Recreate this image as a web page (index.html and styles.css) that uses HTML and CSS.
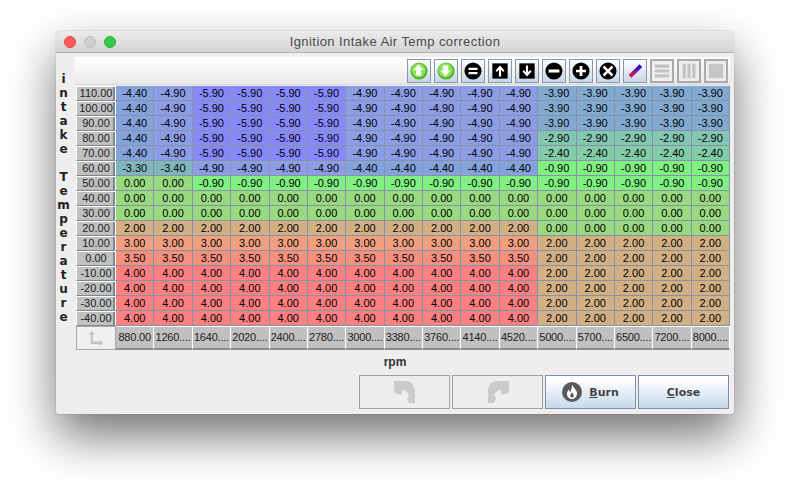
FILE: index.html
```html
<!DOCTYPE html>
<html lang="en">
<head>
    <meta charset="UTF-8">
    <meta name="viewport" content="width=device-width, initial-scale=1.0">
    <title>Ignition Intake Air Temp correction</title>
    <link rel="stylesheet" href="styles.css">
</head>
<body>

<div class="window">
    <div class="titlebar">
        <span class="light light-close"></span>
        <span class="light light-min"></span>
        <span class="light light-max"></span>
        <span class="title">Ignition Intake Air Temp correction</span>
    </div>

    <div class="content">
        <div class="y-label">i<br>n<br>t<br>a<br>k<br>e<br>&nbsp;<br>T<br>e<br>m<br>p<br>e<br>r<br>a<br>t<br>u<br>r<br>e</div>

        <div class="main">
            <div class="toolbar">
                <button class="tool"><svg viewBox="0 0 20 20"><circle cx="10" cy="10" r="9.500" fill="#52b025"/><circle cx="9.500" cy="9.300" r="8" fill="#8ae052"/><path d="M9.500 2.500 15.500 9H12.500V15H6.500V9H3.500Z" fill="#f4fbee"/></svg></button>
                <button class="tool"><svg viewBox="0 0 20 20"><circle cx="10" cy="10" r="9.500" fill="#52b025"/><circle cx="9.500" cy="9.300" r="8" fill="#8ae052"/><path d="M9.500 16 15.500 9.500H12.500V3.500H6.500V9.500H3.500Z" fill="#f4fbee"/></svg></button>
                <button class="tool"><svg viewBox="0 0 20 20"><circle cx="10" cy="10" r="9.500" fill="#000"/><path d="M5 6.500H15V9H5ZM5 11H15V13.500H5Z" fill="#fff"/></svg></button>
                <button class="tool"><svg viewBox="0 0 20 20"><rect x="1.500" y="1.500" width="17" height="17" fill="#000"/><path d="M10 4 15 9.500 13.500 11 11.200 8.600V16H8.800V8.600L6.500 11 5 9.500Z" fill="#fff"/></svg></button>
                <button class="tool"><svg viewBox="0 0 20 20"><rect x="1.500" y="1.500" width="17" height="17" fill="#000"/><path d="M10 16 15 10.500 13.500 9 11.200 11.400V4H8.800V11.400L6.500 9 5 10.500Z" fill="#fff"/></svg></button>
                <button class="tool"><svg viewBox="0 0 20 20"><circle cx="10" cy="10" r="9.500" fill="#000"/><rect x="4" y="8.300" width="12" height="3.400" fill="#fff"/></svg></button>
                <button class="tool"><svg viewBox="0 0 20 20"><circle cx="10" cy="10" r="9.500" fill="#000"/><path d="M8.500 4.500H11.500V8.500H15.500V11.500H11.500V15.500H8.500V11.500H4.500V8.500H8.500Z" fill="#fff"/></svg></button>
                <button class="tool"><svg viewBox="0 0 20 20"><circle cx="10" cy="10" r="9.500" fill="#000"/><path d="M6 4 10 8 14 4 16 6 12 10 16 14 14 16 10 12 6 16 4 14 8 10 4 6Z" fill="#fff"/></svg></button>
                <button class="tool"><svg viewBox="0 0 20 20"><defs><linearGradient id="pen" x1="0" y1="1" x2="1" y2="0"><stop offset="0" stop-color="#f00"/><stop offset=".35" stop-color="#a01878"/><stop offset="1" stop-color="#00f"/></linearGradient></defs><path d="M3 15 15 3 18 6 6 18Z" fill="url(#pen)" transform="translate(0 -.5)"/></svg></button>
                <button class="tool tool-off"><svg viewBox="0 0 20 20"><path d="M1 2H19V6H1ZM1 8H19V12H1ZM1 14H19V18H1Z" fill="#c2c2c2"/></svg></button>
                <button class="tool tool-off"><svg viewBox="0 0 20 20"><path d="M2 1H6V19H2ZM8 1H12V19H8ZM14 1H18V19H14Z" fill="#c2c2c2"/></svg></button>
                <button class="tool tool-off"><svg viewBox="0 0 20 20"><rect x="1" y="1" width="18" height="18" fill="#c6c6c6"/></svg></button>
            </div>

            <table class="grid">
                <tr><th>110.00</th><td class="a">-4.40</td><td class="b">-4.90</td><td class="p">-5.90</td><td class="p">-5.90</td><td class="p">-5.90</td><td class="p">-5.90</td><td class="b">-4.90</td><td class="b">-4.90</td><td class="b">-4.90</td><td class="b">-4.90</td><td class="b">-4.90</td><td class="c">-3.90</td><td class="c">-3.90</td><td class="c">-3.90</td><td class="c">-3.90</td><td class="c">-3.90</td></tr>
                <tr><th>100.00</th><td class="a">-4.40</td><td class="b">-4.90</td><td class="p">-5.90</td><td class="p">-5.90</td><td class="p">-5.90</td><td class="p">-5.90</td><td class="b">-4.90</td><td class="b">-4.90</td><td class="b">-4.90</td><td class="b">-4.90</td><td class="b">-4.90</td><td class="c">-3.90</td><td class="c">-3.90</td><td class="c">-3.90</td><td class="c">-3.90</td><td class="c">-3.90</td></tr>
                <tr><th>90.00</th><td class="a">-4.40</td><td class="b">-4.90</td><td class="p">-5.90</td><td class="p">-5.90</td><td class="p">-5.90</td><td class="p">-5.90</td><td class="b">-4.90</td><td class="b">-4.90</td><td class="b">-4.90</td><td class="b">-4.90</td><td class="b">-4.90</td><td class="c">-3.90</td><td class="c">-3.90</td><td class="c">-3.90</td><td class="c">-3.90</td><td class="c">-3.90</td></tr>
                <tr><th>80.00</th><td class="a">-4.40</td><td class="b">-4.90</td><td class="p">-5.90</td><td class="p">-5.90</td><td class="p">-5.90</td><td class="p">-5.90</td><td class="b">-4.90</td><td class="b">-4.90</td><td class="b">-4.90</td><td class="b">-4.90</td><td class="b">-4.90</td><td class="d">-2.90</td><td class="d">-2.90</td><td class="d">-2.90</td><td class="d">-2.90</td><td class="d">-2.90</td></tr>
                <tr><th>70.00</th><td class="a">-4.40</td><td class="b">-4.90</td><td class="p">-5.90</td><td class="p">-5.90</td><td class="p">-5.90</td><td class="p">-5.90</td><td class="b">-4.90</td><td class="b">-4.90</td><td class="b">-4.90</td><td class="b">-4.90</td><td class="b">-4.90</td><td class="e">-2.40</td><td class="e">-2.40</td><td class="e">-2.40</td><td class="e">-2.40</td><td class="e">-2.40</td></tr>
                <tr><th>60.00</th><td class="f">-3.30</td><td class="f">-3.40</td><td class="b">-4.90</td><td class="b">-4.90</td><td class="b">-4.90</td><td class="b">-4.90</td><td class="a">-4.40</td><td class="a">-4.40</td><td class="a">-4.40</td><td class="a">-4.40</td><td class="a">-4.40</td><td class="g">-0.90</td><td class="g">-0.90</td><td class="g">-0.90</td><td class="g">-0.90</td><td class="g">-0.90</td></tr>
                <tr><th>50.00</th><td class="h">0.00</td><td class="h">0.00</td><td class="g">-0.90</td><td class="g">-0.90</td><td class="g">-0.90</td><td class="g">-0.90</td><td class="g">-0.90</td><td class="g">-0.90</td><td class="g">-0.90</td><td class="g">-0.90</td><td class="g">-0.90</td><td class="g">-0.90</td><td class="g">-0.90</td><td class="g">-0.90</td><td class="g">-0.90</td><td class="g">-0.90</td></tr>
                <tr><th>40.00</th><td class="h">0.00</td><td class="h">0.00</td><td class="h">0.00</td><td class="h">0.00</td><td class="h">0.00</td><td class="h">0.00</td><td class="h">0.00</td><td class="h">0.00</td><td class="h">0.00</td><td class="h">0.00</td><td class="h">0.00</td><td class="h">0.00</td><td class="h">0.00</td><td class="h">0.00</td><td class="h">0.00</td><td class="h">0.00</td></tr>
                <tr><th>30.00</th><td class="h">0.00</td><td class="h">0.00</td><td class="h">0.00</td><td class="h">0.00</td><td class="h">0.00</td><td class="h">0.00</td><td class="h">0.00</td><td class="h">0.00</td><td class="h">0.00</td><td class="h">0.00</td><td class="h">0.00</td><td class="h">0.00</td><td class="h">0.00</td><td class="h">0.00</td><td class="h">0.00</td><td class="h">0.00</td></tr>
                <tr><th>20.00</th><td class="i">2.00</td><td class="i">2.00</td><td class="i">2.00</td><td class="i">2.00</td><td class="i">2.00</td><td class="i">2.00</td><td class="i">2.00</td><td class="i">2.00</td><td class="i">2.00</td><td class="i">2.00</td><td class="i">2.00</td><td class="h">0.00</td><td class="h">0.00</td><td class="h">0.00</td><td class="h">0.00</td><td class="h">0.00</td></tr>
                <tr><th>10.00</th><td class="j">3.00</td><td class="j">3.00</td><td class="j">3.00</td><td class="j">3.00</td><td class="j">3.00</td><td class="j">3.00</td><td class="j">3.00</td><td class="j">3.00</td><td class="j">3.00</td><td class="j">3.00</td><td class="j">3.00</td><td class="i">2.00</td><td class="i">2.00</td><td class="i">2.00</td><td class="i">2.00</td><td class="i">2.00</td></tr>
                <tr><th>0.00</th><td class="k">3.50</td><td class="k">3.50</td><td class="k">3.50</td><td class="k">3.50</td><td class="k">3.50</td><td class="k">3.50</td><td class="k">3.50</td><td class="k">3.50</td><td class="k">3.50</td><td class="k">3.50</td><td class="k">3.50</td><td class="i">2.00</td><td class="i">2.00</td><td class="i">2.00</td><td class="i">2.00</td><td class="i">2.00</td></tr>
                <tr><th>-10.00</th><td class="r">4.00</td><td class="r">4.00</td><td class="r">4.00</td><td class="r">4.00</td><td class="r">4.00</td><td class="r">4.00</td><td class="r">4.00</td><td class="r">4.00</td><td class="r">4.00</td><td class="r">4.00</td><td class="r">4.00</td><td class="i">2.00</td><td class="i">2.00</td><td class="i">2.00</td><td class="i">2.00</td><td class="i">2.00</td></tr>
                <tr><th>-20.00</th><td class="r">4.00</td><td class="r">4.00</td><td class="r">4.00</td><td class="r">4.00</td><td class="r">4.00</td><td class="r">4.00</td><td class="r">4.00</td><td class="r">4.00</td><td class="r">4.00</td><td class="r">4.00</td><td class="r">4.00</td><td class="i">2.00</td><td class="i">2.00</td><td class="i">2.00</td><td class="i">2.00</td><td class="i">2.00</td></tr>
                <tr><th>-30.00</th><td class="r">4.00</td><td class="r">4.00</td><td class="r">4.00</td><td class="r">4.00</td><td class="r">4.00</td><td class="r">4.00</td><td class="r">4.00</td><td class="r">4.00</td><td class="r">4.00</td><td class="r">4.00</td><td class="r">4.00</td><td class="i">2.00</td><td class="i">2.00</td><td class="i">2.00</td><td class="i">2.00</td><td class="i">2.00</td></tr>
                <tr><th>-40.00</th><td class="r">4.00</td><td class="r">4.00</td><td class="r">4.00</td><td class="r">4.00</td><td class="r">4.00</td><td class="r">4.00</td><td class="r">4.00</td><td class="r">4.00</td><td class="r">4.00</td><td class="r">4.00</td><td class="r">4.00</td><td class="i">2.00</td><td class="i">2.00</td><td class="i">2.00</td><td class="i">2.00</td><td class="i">2.00</td></tr>
                <tr class="x-axis">
                    <th class="corner"><svg viewBox="0 0 18 18"><path d="M4 1 7.500 5H5.500V13H13V11L17 14.500 13 18V16H3V5H.5Z" fill="#c4c4c4"/></svg></th>
                    <th>880.00</th><th>1260....</th><th>1640....</th><th>2020....</th><th>2400....</th><th>2780....</th><th>3000....</th><th>3380....</th><th>3760....</th><th>4140....</th><th>4520....</th><th>5000....</th><th>5700....</th><th>6500....</th><th>7200....</th><th>8000....</th>
                </tr>
            </table>
        </div>
    </div>

    <div class="x-label">rpm</div>

    <div class="actions">
        <button class="action" disabled><svg viewBox="0 0 24 24"><path d="M1 1H14C19 1 22 6 22 12V23H16L14 19 16 15C15 12 12 10 9 10V15L2 13 1 10Z" fill="#cbcbcb"/></svg></button>
        <button class="action" disabled><svg viewBox="0 0 24 24"><path d="M23 1H10C5 1 2 6 2 12V23H8L10 19 8 15C9 12 12 10 15 10V15L22 13 23 10Z" fill="#cbcbcb"/></svg></button>
        <button class="action action-on"><svg viewBox="0 0 20 20"><circle cx="10" cy="10" r="10" fill="#595959"/><path d="M10.500 2.500C11 6 15.500 8 15 12C14.600 15.500 12 17 10 17C7.500 17 5 15 5 12C5 10 6 8.500 7 7.500C7.200 9 7.800 10 8.500 10C9.500 8 9.500 5 10.500 2.500Z" fill="#fff"/><path d="M10 10C10.500 12 12 12.500 11.800 14C11.600 15 10.800 15.500 10 15.500C9 15.500 8.200 14.800 8.200 13.800C8.200 12.500 9.500 11.500 10 10Z" fill="#595959"/></svg><span><u>B</u>urn</span></button>
        <button class="action action-on"><span><u>C</u>lose</span></button>
    </div>
</div>

</body>
</html>
```

FILE: styles.css
```css
html, body {
    height: 100%;
}

body {
    margin: 0;
    padding: 31px 56px 0;
    box-sizing: border-box;
    background-color: white;
    font-family: "Liberation Sans", Arial, sans-serif;
    overflow: hidden;
}

.window {
    width: 678px;
    height: 383px;
    display: flex;
    flex-direction: column;
    background-color: #eeeeee;
    border-radius: 5px 5px 2px 2px;
    box-shadow: 0 0 1px rgba(0,0,0,0.55), 0 22px 48px rgba(0,0,0,0.55);
}

/* title bar */
.titlebar {
    height: 22px;
    flex: none;
    display: flex;
    align-items: center;
    gap: 8px;
    padding-left: 8px;
    box-sizing: border-box;
    position: relative;
    border-radius: 5px 5px 0 0;
    border-bottom: 1px solid #b4b4b4;
    background: linear-gradient(#ebebeb, #d4d4d4);
}

.light {
    width: 12px;
    height: 12px;
    border-radius: 50%;
    box-sizing: border-box;
}

.light-close { background-color: #fc5b57; border: 1px solid #e2463f; }
.light-min { background-color: #cfcfcf; border: 1px solid #bcbcbc; }
.light-max { background-color: #35c94a; border: 1px solid #28b139; }

.title {
    position: absolute;
    left: 0;
    right: 0;
    text-align: center;
    font-size: 13px;
    letter-spacing: 0.43px;
    color: #4a4a4a;
}

/* body of the window */
.content {
    display: flex;
}

.y-label {
    width: 15px;
    padding-top: 19px;
    flex: none;
    text-align: center;
    font-family: "DejaVu Sans", sans-serif;
    font-weight: bold;
    font-size: 12px;
    line-height: 14px;
    color: #222222;
}

.main {
    width: 659px;
    padding-left: 4px;
    box-sizing: border-box;
    padding-top: 4px;
}

.toolbar {
    height: 27px;
    display: flex;
    justify-content: flex-end;
    align-items: center;
    gap: 3px;
    padding-right: 2px;
    background: linear-gradient(white, #e9e9e9);
    border-bottom: 1px solid #d8d8d8;
}

.tool {
    width: 24px;
    height: 24px;
    padding: 0;
    display: flex;
    justify-content: center;
    align-items: center;
    border: 1px solid #8a98a6;
    background: linear-gradient(white, #c4d6e8);
}

.tool svg {
    width: 18px;
    height: 18px;
}

.tool-off {
    border: 2px solid #a9a9a9;
    background: #eeeeee;
}

.tool-off svg {
    width: 16px;
    height: 16px;
}

/* table */
.grid {
    width: 654px;
    margin: 1px 0 0 1px;
    table-layout: fixed;
    border-collapse: separate;
    border-spacing: 0;
    font-size: 11px;
    color: black;
}

.grid tr {
    height: 15px;
}

.grid th, .grid td {
    text-align: center;
    box-sizing: border-box;
    overflow: hidden;
    white-space: nowrap;
    line-height: 13px;
}

.grid td {
    padding: 1px 0 0;
    border-right: 1px solid #8494a6;
    border-bottom: 1px solid #8494a6;
}

.grid th {
    width: 40px;
    padding: 0;
    font-weight: normal;
    color: #222222;
    background-color: #c0c0c0;
    border-top: 1px solid white;
    border-left: 1px solid white;
    border-bottom: 1px solid #7d8790;
    border-right: 1px solid white;
    box-shadow: inset -2px 0 0 #7d8790;
}

.grid .x-axis {
    height: 24px;
}

.grid .x-axis th {
    width: auto;
    letter-spacing: -0.2px;
    border-top: 1px solid white;
    border-left: none;
    border-right: 1px solid white;
    border-bottom: 2px solid #8a8a8a;
    box-shadow: none;
}

.grid .x-axis .corner {
    width: 40px;
    background-color: #f0f0f0;
    border: 1px solid #a8a8a8;
}

.corner svg {
    width: 16px;
    height: 16px;
    vertical-align: middle;
}

/* cell colours by value */
.p { background-color: #8888ff; }
.b { background-color: #8c9de6; }
.a { background-color: #84a2dc; }
.c { background-color: #82aad0; }
.f { background-color: #82b6bf; }
.d { background-color: #84c6b2; }
.e { background-color: #82cca8; }
.g { background-color: #80f080; }
.h { background-color: #99d980; }
.i { background-color: #d2b084; }
.j { background-color: #f0a080; }
.k { background-color: #f89080; }
.r { background-color: #ff8080; }

/* bottom */
.x-label {
    height: 25px;
    text-align: center;
    font-size: 12px;
    font-weight: bold;
    line-height: 25px;
    color: #333333;
}

.actions {
    display: flex;
    justify-content: flex-end;
    gap: 2px;
    padding-right: 5px;
}

.action {
    width: 91px;
    height: 34px;
    padding: 0;
    display: flex;
    justify-content: center;
    align-items: center;
    gap: 7px;
    border: 1px solid #a0a0a0;
    background: #eeeeee;
    font-family: "DejaVu Sans", sans-serif;
    font-weight: bold;
    font-size: 11px;
    color: #444444;
}

.action svg {
    width: 24px;
    height: 24px;
}

.action-on {
    border: 1px solid #8090a0;
    background: linear-gradient(white 10%, #c6d9eb);
}

.action-on svg {
    width: 20px;
    height: 20px;
}
```
